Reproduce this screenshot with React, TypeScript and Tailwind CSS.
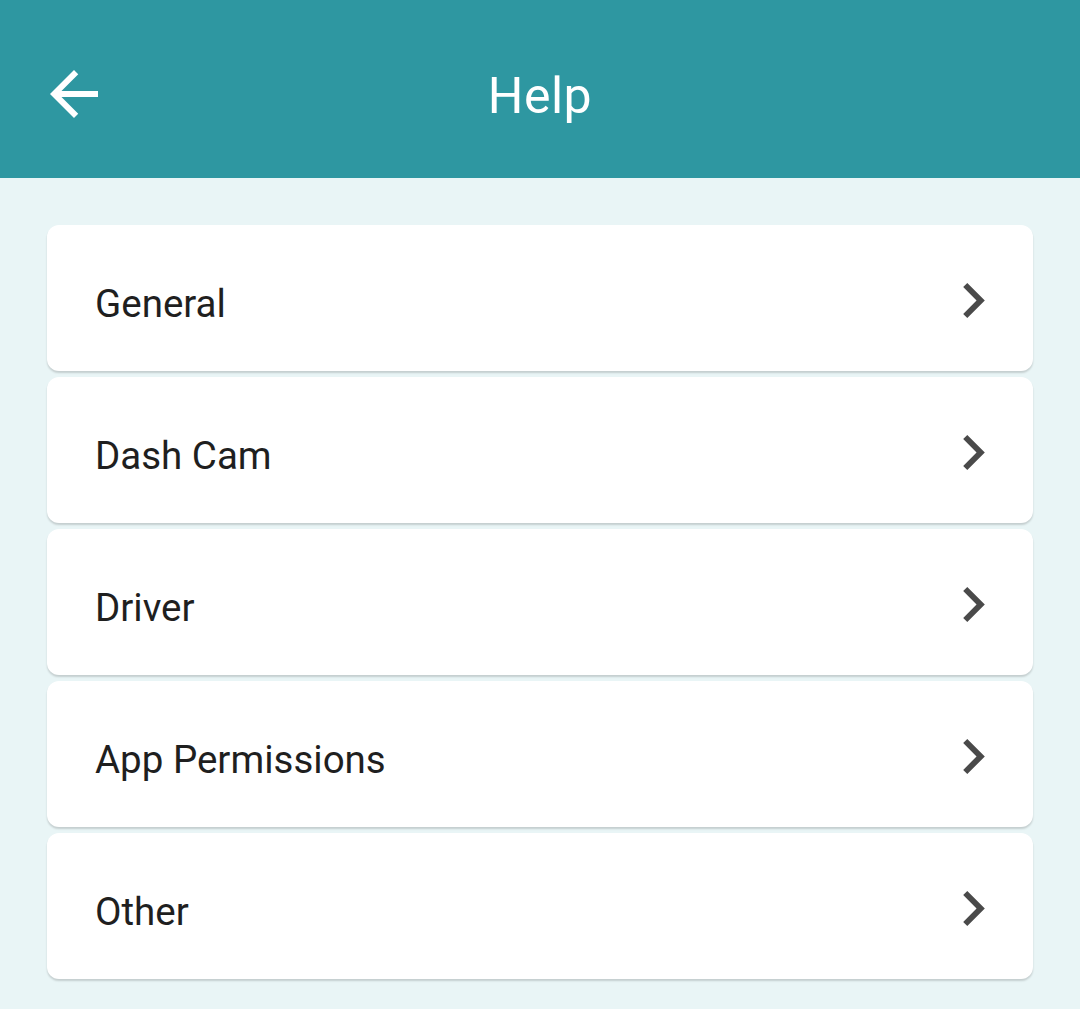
const topics = ["General", "Dash Cam", "Driver", "App Permissions", "Other"];

function ChevronRight() {
  return (
    <svg viewBox="8.59 6 7.41 12" width="22" height="35" className="shrink-0">
      <path d="M10 6L8.59 7.41 13.17 12l-4.58 4.59L10 18l6-6z" fill="#4a4a4a" />
    </svg>
  );
}

export default function App() {
  return (
    <div className="min-h-[1009px] w-full bg-[#e9f5f6] font-['Roboto',sans-serif]">
      {/* app bar */}
      <header className="relative flex h-[178px] items-center justify-center bg-[#2e97a1] pt-[14px]">
        <button className="absolute left-[50px] top-[70px] flex h-[48px] w-[48px] items-center justify-center">
          <svg viewBox="4 4 16 16" width="48" height="48">
            <path d="M20 11H7.83l5.59-5.59L12 4l-8 8 8 8 1.41-1.41L7.83 13H20v-2z" fill="#ffffff" />
          </svg>
        </button>
        <h1 className="text-[50px] font-normal leading-none tracking-[0.5px] text-white">Help</h1>
      </header>

      {/* topic list */}
      <div className="flex flex-col gap-[6px] px-[47px] pt-[47px]">
        {topics.map((t) => (
          <div
            key={t}
            className="flex h-[146px] items-center justify-between rounded-[12px] bg-white pl-[48px] pr-[48px] pt-[5px] shadow-[0_2px_2px_rgba(0,0,0,0.16)]"
          >
            <span className="mt-[6px] text-[38.5px] font-normal text-[#1f1f1f]">{t}</span>
            <ChevronRight />
          </div>
        ))}
      </div>
    </div>
  );
}
